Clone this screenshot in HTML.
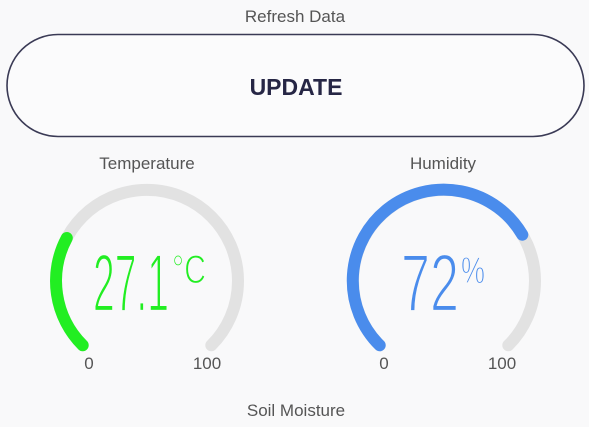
<!DOCTYPE html>
<html><head><meta charset="utf-8"><style>
html,body{margin:0;padding:0;background:#f9f9fa;width:589px;height:427px;overflow:hidden;font-family:"Liberation Sans",sans-serif}
</style></head><body>
<svg width="589" height="427" viewBox="0 0 589 427" xmlns="http://www.w3.org/2000/svg" style="position:absolute;left:0;top:0">
<text x="295" y="22" text-anchor="middle" font-size="17" fill="#555" font-family="Liberation Sans,sans-serif">Refresh Data</text>
<rect x="7" y="34.5" width="577" height="102" rx="51" fill="#fbfbfc" stroke="#3a3a55" stroke-width="1.6"/>
<text x="296" y="95" text-anchor="middle" font-size="23" font-weight="bold" fill="#262645" font-family="Liberation Sans,sans-serif">UPDATE</text>

<text x="147" y="169" text-anchor="middle" font-size="17" fill="#555" font-family="Liberation Sans,sans-serif">Temperature</text>
<text x="443" y="169" text-anchor="middle" font-size="17" fill="#555" font-family="Liberation Sans,sans-serif">Humidity</text>

<g fill="none" stroke-width="12" stroke-linecap="round">
<path d="M82.7 345.3 A91 91 0 1 1 211.3 345.3" stroke="#e2e2e2"/>
<path d="M82.7 345.3 A91 91 0 0 1 66.8 238" stroke="#22ee22"/>
<path d="M379.7 345.3 A91 91 0 1 1 508.3 345.3" stroke="#e2e2e2"/>
<path d="M379.7 345.3 A91 91 0 1 1 522.3 234.7" stroke="#4a8cec"/>
</g>

<g font-family="Liberation Sans,sans-serif" stroke="#f9f9fa" stroke-width="2.2" paint-order="normal">
<text x="93" y="311" font-size="82" fill="#22ee22" textLength="76" lengthAdjust="spacingAndGlyphs">27.1</text>
<text x="172" y="283" font-size="40" fill="#22ee22" textLength="34" lengthAdjust="spacingAndGlyphs" stroke-width="1.2">°C</text>
<text x="401" y="311" font-size="82" fill="#4a8cec" textLength="58" lengthAdjust="spacingAndGlyphs">72</text>
<text x="461" y="283" font-size="38" fill="#4a8cec" textLength="24" lengthAdjust="spacingAndGlyphs" stroke-width="1.2">%</text>
</g>

<g font-size="17" fill="#555" font-family="Liberation Sans,sans-serif" text-anchor="middle">
<text x="89" y="369">0</text>
<text x="207" y="369">100</text>
<text x="384" y="369">0</text>
<text x="502" y="369">100</text>
<text x="296" y="416">Soil Moisture</text>
</g>
</svg>
</body></html>
